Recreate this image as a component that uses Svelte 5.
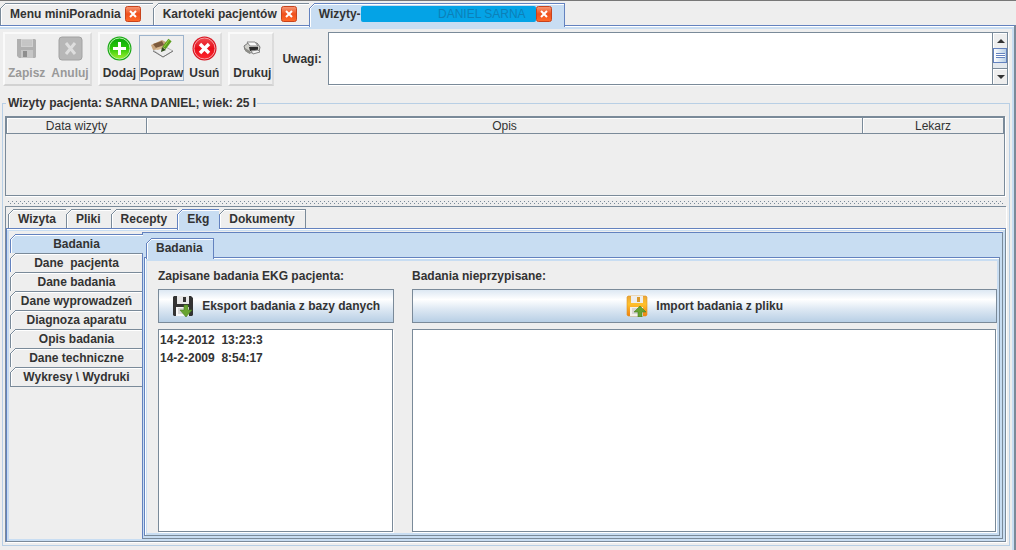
<script>
	let mainTabs = [
		{ title: "Menu miniPoradnia" },
		{ title: "Kartoteki pacjentów" },
		{ title: "Wizyty-", hidden: "DANIEL SARNA" },
	];
	let activeMain = 2;

	let visitTabs = ["Wizyta", "Pliki", "Recepty", "Ekg", "Dokumenty"];
	let activeVisit = 3;

	let sideTabs = [
		"Badania",
		"Dane  pacjenta",
		"Dane badania",
		"Dane wyprowadzeń",
		"Diagnoza aparatu",
		"Opis badania",
		"Dane techniczne",
		"Wykresy \\ Wydruki",
	];
	let activeSide = 0;

	let saved = ["14-2-2012  13:23:3", "14-2-2009  8:54:17"];
	let notes = "";
</script>

<div class="app">
	<nav class="tabs main-tabs">
		{#each mainTabs as tab, i}
			<div class="tab" class:selected={i === activeMain}>
				<button class="title" on:click={() => (activeMain = i)}>{tab.title}</button>
				{#if tab.hidden}<span class="marker">{tab.hidden}</span>{/if}
				<button class="close" aria-label="Zamknij">
					<svg width="16" height="16" viewBox="0 0 16 16">
						<defs>
							<linearGradient id="close{i}" x2="0" y2="1">
								<stop offset="0" stop-color="#f59a78" />
								<stop offset=".5" stop-color="#f0501c" />
								<stop offset="1" stop-color="#ff6a2a" />
							</linearGradient>
						</defs>
						<rect x=".5" y=".5" width="15" height="15" rx="2" fill="url(#close{i})" stroke="#c8431c" />
						<path d="M5 5l6 6M11 5l-6 6" stroke="#fff" stroke-width="2" />
					</svg>
				</button>
			</div>
		{/each}
	</nav>

	<main class="page">
		<header class="toolbar">
			<div class="group">
				<button disabled>
					<svg width="25" height="25" viewBox="0 0 25 25">
						<path d="M3 3h18l1 1v17l-1 1H5l-2-2z" fill="#b0b0b0" />
						<path d="M7 3h12v8H7z" fill="#d0d0d0" />
						<path d="M8 5h10M8 7h10M8 9h10" stroke="#bbb" />
						<path d="M7 14h12v8H7z" fill="#c6c6c6" />
						<path d="M9 15h4v6H9z" fill="#8e8e8e" />
					</svg>
					<span>Zapisz</span>
				</button>
				<button disabled>
					<svg width="25" height="25" viewBox="0 0 25 25">
						<rect x="1" y="1" width="23" height="23" rx="3" fill="#b7b7b7" stroke="#a2a2a2" />
						<path d="M8 7l9 11M17 7l-9 11" stroke="#dedede" stroke-width="3" />
					</svg>
					<span>Anuluj</span>
				</button>
			</div>
			<div class="group">
				<button>
					<svg width="25" height="25" viewBox="0 0 25 25">
						<defs>
							<linearGradient id="green" x2="0" y2="1">
								<stop offset="0" stop-color="#08a80c" />
								<stop offset=".5" stop-color="#2cc908" />
								<stop offset="1" stop-color="#a0f030" />
							</linearGradient>
						</defs>
						<circle cx="12.5" cy="12.5" r="12" fill="#18a814" />
						<circle cx="12.5" cy="12.5" r="10.5" fill="url(#green)" stroke="#b9efaa" />
						<path d="M12.5 6v13M6 12.5h13" stroke="#fff" stroke-width="3" />
					</svg>
					<span>Dodaj</span>
				</button>
				<button class="hot">
					<svg width="25" height="25" viewBox="0 0 25 25">
						<path d="M4 14l9-5 11 6-10 6z" fill="#ededed" stroke="#b5b5b5" />
						<path d="M4 15l10 6 10-6" fill="none" stroke="#777" />
						<path d="M2 9l11-5 4 2v5l-6 2-7 1z" fill="#c9a57c" />
						<path d="M4 8l9-3 2 4-8 3z" fill="#7c5a3c" />
						<path d="M7 12l8-2 1 2-8 2z" fill="#d8b890" />
						<path d="M21 4l-6 8" stroke="#5b9e1d" stroke-width="4" />
						<path d="M20 4l-5 7" stroke="#9bd33c" />
						<path d="M13 11l4 3-5 2z" fill="#334d20" />
					</svg>
					<span>Popraw</span>
				</button>
				<button>
					<svg width="25" height="25" viewBox="0 0 25 25">
						<defs>
							<linearGradient id="red" x2="0" y2="1">
								<stop offset="0" stop-color="#f04a50" />
								<stop offset=".5" stop-color="#e80c18" />
								<stop offset="1" stop-color="#ff2830" />
							</linearGradient>
						</defs>
						<circle cx="12.5" cy="12.5" r="12" fill="#d81420" />
						<circle cx="12.5" cy="12.5" r="10.5" fill="url(#red)" stroke="#f9a0a4" />
						<path d="M8 8l9 9M17 8l-9 9" stroke="#fff" stroke-width="3.4" />
					</svg>
					<span>Usuń</span>
				</button>
			</div>
			<div class="group">
				<button>
					<svg width="25" height="25" viewBox="0 0 25 25">
						<path d="M4 10l4-3h9l3 4-1 5-10 1-4-3z" fill="#cfcfca" stroke="#777" />
						<path d="M7 6l8 0 3 4-8 0z" fill="#fafafa" stroke="#888" />
						<path d="M9 11l9 0v3l-8 1z" fill="#2b2b2b" />
						<path d="M5 12l5 3v3l-5-3z" fill="#8d8d88" />
						<path d="M11 15l7-1 2 2-7 2z" fill="#f4f4f4" stroke="#888" />
					</svg>
					<span>Drukuj</span>
				</button>
			</div>
			<label for="notes">Uwagi:</label>
			<div class="scrollbox">
				<textarea id="notes" bind:value={notes}></textarea>
				<div class="scrollbar">
					<button aria-label="W górę">
						<svg width="8" height="4" viewBox="0 0 8 4"><path d="M4 0l4 4H0z" fill="#333" /></svg>
					</button>
					<div class="thumb"></div>
					<div class="track"></div>
					<button aria-label="W dół">
						<svg width="8" height="4" viewBox="0 0 8 4"><path d="M0 0h8L4 4z" fill="#333" /></svg>
					</button>
				</div>
			</div>
		</header>

		<section class="patient">
			<h1>Wizyty pacjenta: SARNA DANIEL; wiek: 25 l</h1>
			<div class="table-box">
				<table>
					<thead>
						<tr>
							<th class="side">Data wizyty</th>
							<th>Opis</th>
							<th class="side">Lekarz</th>
						</tr>
					</thead>
				</table>
			</div>
			<div class="divider"></div>

			<section class="visit">
				<nav class="tabs visit-tabs">
					{#each visitTabs as name, i}
						<button class="tab" class:selected={i === activeVisit} on:click={() => (activeVisit = i)}>{name}</button>
					{/each}
				</nav>
				<div class="visit-body">
					<nav class="side-tabs">
						{#each sideTabs as name, i}
							<button class="tab" class:selected={i === activeSide} on:click={() => (activeSide = i)}>{name}</button>
						{/each}
					</nav>
					<div class="ekg">
						<nav class="tabs ekg-tabs">
							<button class="tab selected">Badania</button>
						</nav>
						<div class="exams">
							<section class="saved">
								<h2>Zapisane badania EKG pacjenta:</h2>
								<button class="wide">
									<svg width="22" height="22" viewBox="0 0 22 22">
										<path d="M1 2l1-1h17l2 2v17l-1 1H2l-1-1z" fill="#333" />
										<path d="M5 1h12v8H5z" fill="#e8e8e8" />
										<path d="M11 2h3v5h-3z" fill="#333" />
										<path d="M4 12h13v9H4z" fill="#f7f7f7" />
										<path d="M6 14h6M6 16h6M6 18h5" stroke="#bbb" />
										<path d="M12 10h4v5h4l-6 7-6-7h4z" fill="#68a431" stroke="#477d20" stroke-width=".6" />
									</svg>
									Eksport badania z bazy danych
								</button>
								<ul>
									{#each saved as item}
										<li>{item}</li>
									{/each}
								</ul>
							</section>
							<section class="unassigned">
								<h2>Badania nieprzypisane:</h2>
								<button class="wide">
									<svg width="22" height="22" viewBox="0 0 22 22">
										<defs>
											<linearGradient id="disk" x2="0" y2="1">
												<stop offset="0" stop-color="#e9a63c" />
												<stop offset=".4" stop-color="#ffc12c" />
												<stop offset="1" stop-color="#f08010" />
											</linearGradient>
										</defs>
										<path d="M1 2l1-1h18l1 1v18l-1 1H2l-1-1z" fill="url(#disk)" stroke="#df941e" stroke-width=".6" />
										<path d="M5 1h12v7H5z" fill="#eee" />
										<path d="M11 2h3v5h-3z" fill="#d99a2c" />
										<path d="M4 12h13v9H4z" fill="#f4f1ea" />
										<path d="M6 14h6M6 16h5M6 18h6" stroke="#bbb" />
										<path d="M14 11l6 6h-4v5h-4v-5H8z" fill="#68a431" stroke="#477d20" stroke-width=".6" />
									</svg>
									Import badania z pliku
								</button>
								<ul></ul>
							</section>
						</div>
					</div>
				</div>
			</section>
		</section>
	</main>
</div>

<style>
	:global(body) {
		margin: 0;
		background: #eee;
	}

	* {
		box-sizing: border-box;
	}

	.app {
		display: flex;
		flex-direction: column;
		min-height: 100vh;
		border-top: 1px solid #777;
		background: #eee;
		color: #333;
		font: bold 12px/16px "Liberation Sans", Arial, sans-serif;
	}

	button {
		font: inherit;
		color: inherit;
		padding: 0;
		border: 0;
		background: none;
		white-space: pre;
	}

	svg {
		display: block;
		flex: none;
	}

	/* tabs with a cut corner */
	.tabs {
		display: flex;
		position: relative;
		z-index: 1;
	}

	.tab {
		position: relative;
		border: 1px solid #7a8a99;
		border-width: 1px 0 0 1px;
		background: #eee;
		box-shadow: inset 1px 1px #fff;
	}

	.tab::before {
		content: "";
		position: absolute;
		top: -1px;
		left: -1px;
		width: 6px;
		height: 6px;
		background: linear-gradient(135deg, #eee 42%, #7a8a99 42%, #7a8a99 54%, #fff 54%, #fff 62%, transparent 62%);
	}

	.tab:last-child {
		border-right-width: 1px;
	}

	.tab.selected {
		border-color: #6382bf;
		background: #c8ddf2;
	}

	.tab.selected::before {
		background: linear-gradient(135deg, #eee 42%, #6382bf 42%, #6382bf 54%, #fff 54%, #fff 62%, #c8ddf2 62%);
	}

	.ekg-tabs .tab.selected::before {
		background: linear-gradient(135deg, #c8ddf2 42%, #6382bf 42%, #6382bf 54%, #fff 54%, #fff 62%, #c8ddf2 62%);
	}

	.tabs .tab.selected {
		margin-bottom: -2px;
	}

	.tab.selected + .tab {
		border-left-color: #6382bf;
	}

	.main-tabs {
		padding-top: 2px;
	}

	.main-tabs .tab {
		display: flex;
		align-items: flex-start;
		height: 22px;
		padding: 2px 12px 0 9px;
	}

	.main-tabs .tab.selected {
		height: 24px;
	}

	.close {
		margin-left: 4px;
	}

	.marker {
		width: 175px;
		height: 16px;
		margin-right: -4px;
		padding-right: 10px;
		border-radius: 2px;
		background: #04a3e6;
		color: #0c80b8;
		font-weight: normal;
		text-align: right;
	}

	.page {
		flex: 1;
		display: flex;
		flex-direction: column;
		border-top: 1px solid #6382bf;
		border-right: 2px solid #7a8a99;
		box-shadow: inset 0 1px #fff, inset -2px 3px #c8ddf2;
		padding: 6px 4px 4px 2px;
	}

	.toolbar {
		display: flex;
		gap: 6px;
		padding-left: 1px;
	}

	.group {
		display: flex;
		height: 54px;
		padding: 1px 0;
		border: 2px solid #fafafa;
		border-right-color: #ddd;
		border-bottom-color: #d2d2d2;
	}

	.group button {
		display: flex;
		flex-direction: column;
		align-items: center;
		gap: 4px;
		height: 46px;
		padding: 0 2px;
		border: 1px solid transparent;
	}

	.group button:last-child {
		padding-right: 0;
	}

	.group button.hot {
		margin: 0 2px 0 0;
		padding: 0;
		border-color: #9db4cd;
	}

	.group button:disabled {
		color: #999;
	}

	label {
		align-self: center;
		margin-left: 2px;
	}

	.scrollbox {
		flex: 1;
		display: flex;
		height: 53px;
		margin-right: 2px;
		border: 1px solid #7a8a99;
		box-shadow: 1px 1px #fff;
	}

	textarea {
		flex: 1;
		min-width: 0;
		border: 0;
		resize: none;
		outline: none;
		background: #fff;
		font: inherit;
	}

	.scrollbar {
		display: flex;
		flex-direction: column;
		width: 15px;
		border-left: 1px solid #7a8a99;
	}

	.scrollbar button {
		display: grid;
		place-items: center;
		height: 15px;
		border: 1px solid #fff;
		border-width: 1px 0 0 1px;
		background: #eee;
	}

	.thumb {
		height: 15px;
		border: 1px solid #6382bf;
		background:
			repeating-linear-gradient(#6382bf 0 1px, #fff 1px 2px) center / 9px 5px no-repeat,
			linear-gradient(90deg, #fff, #b8cfe5);
	}

	.track {
		flex: 1;
		border-bottom: 1px solid #7a8a99;
		background: #e4e9ee;
	}

	.patient {
		flex: 1;
		display: flex;
		flex-direction: column;
		margin-top: 17px;
		padding: 0 3px 3px 2px;
		border: 1px solid #b8cfe5;
	}

	/* the title sits on the top border */
	h1 {
		align-self: flex-start;
		margin: -9px 0 5px 1px;
		padding: 0 1px 0 2px;
		background: #eee;
		font: inherit;
	}

	.table-box {
		height: 80px;
		margin-right: 1px;
		border: 1px solid #7a8a99;
		box-shadow: 1px 1px #fff;
	}

	table {
		width: 100%;
		table-layout: fixed;
		border-spacing: 0;
		border: 1px solid #7a8a99;
		border-width: 1px 1px 0;
	}

	th {
		height: 16px;
		padding: 1px 0 0;
		border: 1px solid #7a8a99;
		border-width: 0 1px 1px 0;
		box-shadow: inset 1px 1px #fff;
		font-weight: normal;
		line-height: 14px;
	}

	th:last-child {
		border-right: 0;
	}

	.side {
		width: 140px;
	}

	.divider {
		height: 4px;
		margin: 5px 2px 1px 3px;
		background:
			conic-gradient(from 270deg at 1px 1px, #7a8a99 90deg, transparent 0) 0 0 / 4px 4px,
			conic-gradient(from 270deg at 1px 1px, #7a8a99 90deg, transparent 0) 2px 2px / 4px 4px;
	}

	.visit {
		flex: 1;
		display: flex;
		flex-direction: column;
		border-top: 1px solid #7a8a99;
		border-left: 1px solid #7a8a99;
		box-shadow: 1px 1px #fff;
	}

	.visit-tabs {
		padding: 2px 0 0 2px;
	}

	.visit-tabs .tab,
	.ekg-tabs .tab {
		height: 19px;
		padding: 0 10px 0 9px;
	}

	.visit-tabs .tab.selected,
	.ekg-tabs .tab.selected {
		height: 21px;
		padding-bottom: 2px;
	}

	.visit-body {
		flex: 1;
		display: flex;
		border: 1px solid #6382bf;
		border-right-color: #7a8a99;
		border-bottom-color: #7a8a99;
		box-shadow: inset 0 1px #fff, inset 0 0 0 2px #c8ddf2;
		padding: 3px 2px 2px 3px;
	}

	.side-tabs {
		display: flex;
		flex-direction: column;
		width: 132px;
		padding-top: 2px;
	}

	.side-tabs .tab {
		height: 19px;
		line-height: 18px;
	}

	.side-tabs .tab.selected {
		z-index: 1;
		margin-right: -1px;
		padding-right: 1px;
	}

	.side-tabs .tab:last-child {
		height: 20px;
		border-right: 0;
		border-bottom: 1px solid #7a8a99;
	}

	.ekg {
		flex: 1;
		display: flex;
		flex-direction: column;
		min-width: 0;
		padding: 5px 2px 2px 1px;
		border: 1px solid #6382bf;
		border-right-color: #7a8a99;
		border-bottom-color: #7a8a99;
		background: #c8ddf2;
	}

	.ekg-tabs {
		padding-left: 2px;
	}

	.exams {
		flex: 1;
		display: flex;
		gap: 18px;
		padding: 10px 2px 3px 13px;
		border: 1px solid #6382bf;
		border-right-color: #7a8a99;
		border-bottom-color: #7a8a99;
		background: #eee;
		box-shadow: inset 1px 1px #fff, inset -2px -2px #c8ddf2, inset 2px 3px #c8ddf2;
	}

	.exams section {
		display: flex;
		flex-direction: column;
	}

	.saved {
		width: 236px;
	}

	.unassigned {
		flex: 1;
	}

	h2 {
		margin: 0 0 5px;
		font: inherit;
	}

	.wide {
		display: flex;
		align-items: center;
		justify-content: center;
		gap: 5px;
		height: 34px;
		border: 1px solid #7a8a99;
		background: linear-gradient(#dde8f3, #fff 30%, #dde8f3 60%, #b8cfe5);
	}

	ul {
		flex: 1;
		margin: 6px 1px 0 0;
		padding: 1px;
		border: 1px solid #7a8a99;
		background: #fff;
		box-shadow: 1px 1px #fff;
		list-style: none;
	}

	li {
		line-height: 18px;
		white-space: pre;
	}
</style>
